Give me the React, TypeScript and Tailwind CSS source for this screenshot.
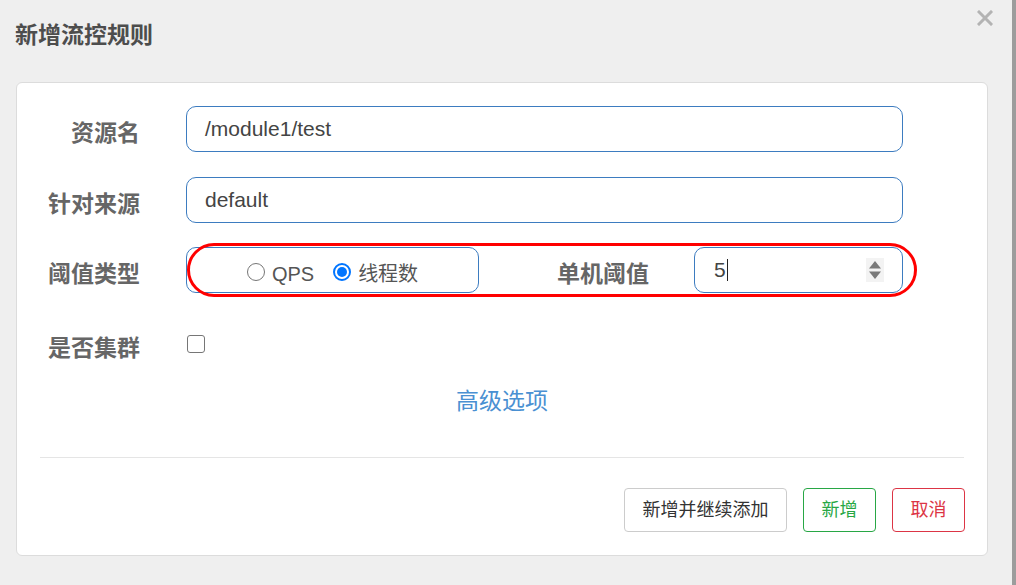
import React from 'react';

const font = { fontFamily: '"Liberation Sans", "Noto Sans CJK SC", sans-serif' };

const Label: React.FC<{ text: string }> = ({ text }) => (
  <div className="h-[46px] w-[123px] text-right text-[23px] font-bold leading-[54px] text-[#666]">{text}</div>
);

const TextInput: React.FC<{ value: string }> = ({ value }) => (
  <div className="ml-[46px] flex h-[46px] w-[717px] items-center rounded-[10px] border border-[#3d7cc0] bg-white pl-[18px] text-[21px] text-[#444]">
    {value}
  </div>
);

const Radio: React.FC<{ checked?: boolean; label: string }> = ({ checked, label }) => (
  <div className="flex items-center">
    {checked ? (
      <span className="flex h-[18px] w-[18px] items-center justify-center rounded-full border-2 border-[#0075ff] bg-white">
        <span className="h-[10px] w-[10px] rounded-full bg-[#0075ff]" />
      </span>
    ) : (
      <span className="h-[18px] w-[18px] rounded-full border-[1.5px] border-[#767676] bg-white" />
    )}
    <span className="ml-[7px] pt-[5px] text-[20px] leading-[28px] text-[#555]">{label}</span>
  </div>
);

const App: React.FC = () => {
  return (
    <div className="flex h-[585px] w-[1016px] overflow-hidden bg-[#efefef]" style={font}>
      <div className="flex-1">
        {/* Header */}
        <div className="flex h-[82px] items-start justify-between pl-[15px] pr-[19px]">
          <h1 className="mt-[20px] text-[23px] font-bold leading-[30px] text-[#4d4d4d]">新增流控规则</h1>
          <svg className="mt-[10px]" width="16" height="16" viewBox="0 0 16 16">
            <path d="M2 2 L14 14 M14 2 L2 14" stroke="#b3b3b3" strokeWidth="3" strokeLinecap="square" />
          </svg>
        </div>

        {/* Card */}
        <div className="ml-[16px] w-[972px] rounded-[6px] border border-[#dcdcdc] bg-white pt-[23px] pb-[23px]">
          <div className="flex items-center">
            <Label text="资源名" />
            <TextInput value="/module1/test" />
          </div>

          <div className="mt-[25px] flex items-center">
            <Label text="针对来源" />
            <TextInput value="default" />
          </div>

          <div className="relative mt-[24px] flex items-center">
            <Label text="阈值类型" />
            <div className="ml-[46px] flex h-[46px] w-[293px] items-center justify-center gap-[19px] rounded-[10px] border border-[#3d7cc0] pt-[3px]">
              <Radio label="QPS" />
              <Radio checked label="线程数" />
            </div>
            <div className="h-[46px] w-[170px] text-right text-[23px] font-bold leading-[54px] text-[#666]">单机阈值</div>
            <div className="ml-[45px] flex h-[46px] w-[209px] items-center justify-between rounded-[10px] border border-[#3d7cc0] bg-white pl-[19px] pr-[18px]">
              <span className="flex items-center text-[21px] text-[#444]">
                5<span className="ml-[1px] inline-block h-[22px] w-[1.5px] bg-[#222]" />
              </span>
              <span className="flex h-[24px] w-[18px] items-center justify-center bg-[#f3f3f3]">
                <svg width="14" height="22" viewBox="0 0 14 22">
                  <path d="M7 2 L13 9.5 L1 9.5 Z" fill="#7a7a7a" />
                  <path d="M1 12.5 L13 12.5 L7 20 Z" fill="#7a7a7a" />
                </svg>
              </span>
            </div>
            {/* annotation */}
            <div className="absolute left-[170px] top-[-4px] h-[54px] w-[730px] rounded-full border-[3px] border-[#ff0000]" />
          </div>

          <div className="mt-[28px] flex items-center">
            <Label text="是否集群" />
            <div className="ml-[47px] h-[18px] w-[18px] rounded-[3px] border-[1.5px] border-[#767676] bg-white" />
          </div>

          <div className="mt-[19px] text-center text-[23px] leading-[30px] text-[#4a90d2]">高级选项</div>

          <div className="mx-[23px] mt-[41px] h-px bg-[#e5e5e5]" />

          <div className="mt-[30px] flex justify-end gap-[16px] pr-[22px]">
            <button className="h-[44px] w-[163px] rounded-[4px] border border-[#cccccc] bg-white text-[18px] text-[#333]">
              新增并继续添加
            </button>
            <button className="h-[44px] w-[73px] rounded-[4px] border border-[#28a745] bg-white text-[18px] text-[#28a745]">
              新增
            </button>
            <button className="h-[44px] w-[73px] rounded-[4px] border border-[#dc3545] bg-white text-[18px] text-[#dc3545]">
              取消
            </button>
          </div>
        </div>
      </div>
      {/* edge of page behind */}
      <div className="w-[4px] bg-[#9c9c9c]" />
    </div>
  );
};

export default App;
